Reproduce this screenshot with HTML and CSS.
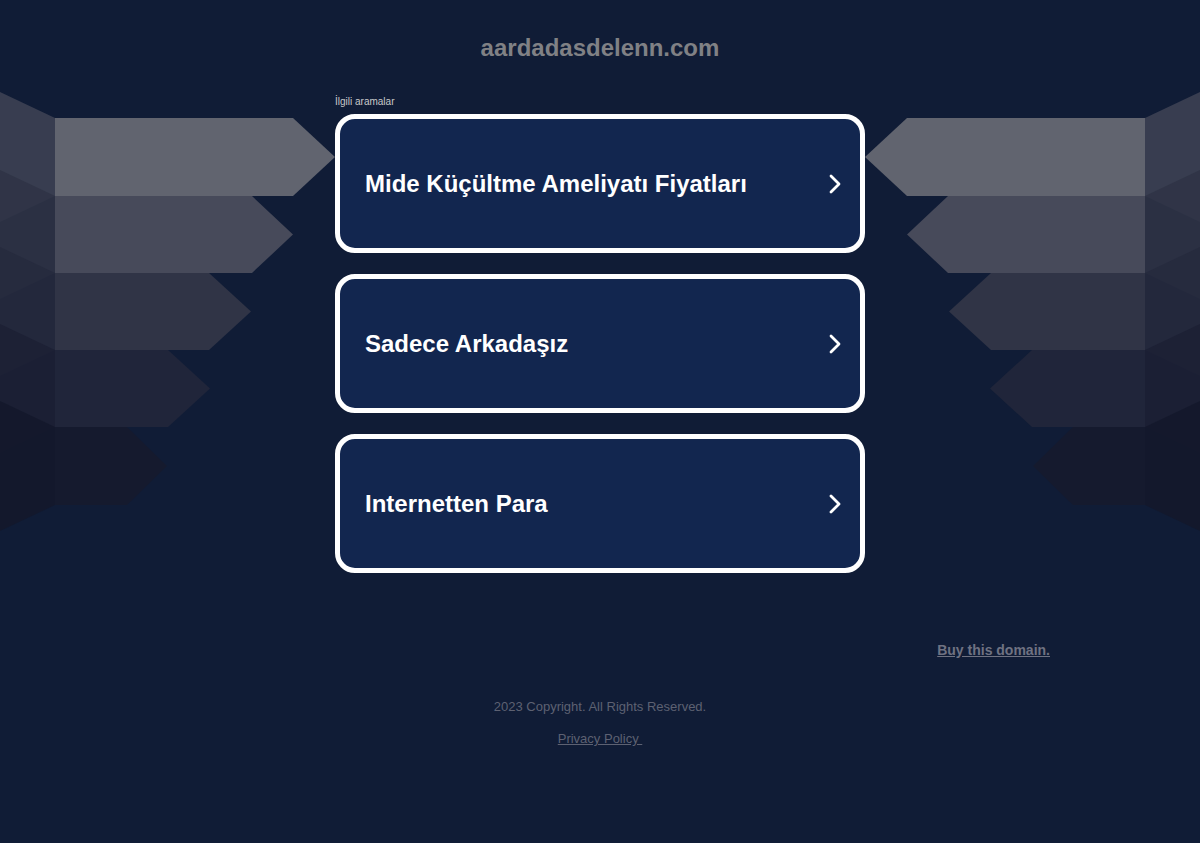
FILE: index.html
```html
<!DOCTYPE html>
<html lang="tr">
<head>
<meta charset="utf-8">
<title>aardadasdelenn.com</title>
<link rel="stylesheet" href="styles.css">
</head>
<body>
<header class="site-title">aardadasdelenn.com</header>
<main class="stage">
  <svg class="art art-left" width="335" height="450" viewBox="0 0 335 450" aria-hidden="true">
    <g class="sides">
      <polygon class="s1" points="55,28 0,2 0,132 55,106"/>
      <polygon class="s2" points="55,106 0,80 0,209 55,183"/>
      <polygon class="s3" points="55,183 0,157 0,286 55,260"/>
      <polygon class="s4" points="55,260 0,234 0,363 55,337"/>
      <polygon class="s5" points="55,337 0,311 0,441 55,415"/>
    </g>
    <polygon class="b1" points="55,28 293,28 335,67 293,106 55,106"/>
    <polygon class="b2" points="55,106 252,106 293,144.5 252,183 55,183"/>
    <polygon class="b3" points="55,183 209,183 251,221.5 209,260 55,260"/>
    <polygon class="b4" points="55,260 168,260 210,298.5 168,337 55,337"/>
    <polygon class="b5" points="55,337 127,337 167,376 127,415 55,415"/>
  </svg>
  <section class="results">
    <p class="label">İlgili aramalar</p>
    <a class="card" href="#">
      <span class="card-text">Mide Küçültme Ameliyatı Fiyatları</span>
      <svg class="chev" width="12" height="20" viewBox="0 0 12 20"><path d="M2 2 L10 10 L2 18"/></svg>
    </a>
    <a class="card" href="#">
      <span class="card-text">Sadece Arkadaşız</span>
      <svg class="chev" width="12" height="20" viewBox="0 0 12 20"><path d="M2 2 L10 10 L2 18"/></svg>
    </a>
    <a class="card" href="#">
      <span class="card-text">Internetten Para</span>
      <svg class="chev" width="12" height="20" viewBox="0 0 12 20"><path d="M2 2 L10 10 L2 18"/></svg>
    </a>
  </section>
  <svg class="art art-right" width="335" height="450" viewBox="0 0 335 450" aria-hidden="true">
    <g class="sides">
      <polygon class="s1" points="55,28 0,2 0,132 55,106"/>
      <polygon class="s2" points="55,106 0,80 0,209 55,183"/>
      <polygon class="s3" points="55,183 0,157 0,286 55,260"/>
      <polygon class="s4" points="55,260 0,234 0,363 55,337"/>
      <polygon class="s5" points="55,337 0,311 0,441 55,415"/>
    </g>
    <polygon class="b1" points="55,28 293,28 335,67 293,106 55,106"/>
    <polygon class="b2" points="55,106 252,106 293,144.5 252,183 55,183"/>
    <polygon class="b3" points="55,183 209,183 251,221.5 209,260 55,260"/>
    <polygon class="b4" points="55,260 168,260 210,298.5 168,337 55,337"/>
    <polygon class="b5" points="55,337 127,337 167,376 127,415 55,415"/>
  </svg>
</main>
<div class="buy"><a href="#">Buy this domain.</a></div>
<footer class="footer">
  <p class="copy">2023 Copyright. All Rights Reserved.</p>
  <p class="privacy"><a href="#">Privacy Policy&nbsp;</a></p>
</footer>
</body>
</html>
```
FILE: styles.css
```css
html, body {
  margin: 0;
  padding: 0;
}
body {
  background: #101c36;
  font-family: "Liberation Sans", Arial, sans-serif;
  width: 1200px;
  height: 843px;
  overflow: hidden;
}
.site-title {
  box-sizing: border-box;
  height: 90px;
  padding-top: 34px;
  font-size: 24px;
  line-height: 28px;
  font-weight: bold;
  color: #808185;
  text-align: center;
}
.stage {
  display: flex;
  align-items: flex-start;
  width: 1200px;
}
.art {
  flex: none;
  display: block;
}
.art-right {
  transform: scaleX(-1);
}
.sides polygon { fill-opacity: 0.88; }
.s1 { fill: #3e4254; }
.s2 { fill: #2f3346; }
.s3 { fill: #262a3d; }
.s4 { fill: #1c2034; }
.s5 { fill: #13182b; }
.b1 { fill: #61646f; }
.b2 { fill: #474a5a; }
.b3 { fill: #303446; }
.b4 { fill: #20253a; }
.b5 { fill: #151a2e; }
.results {
  flex: none;
  width: 530px;
}
.label {
  margin: 0;
  padding-top: 6px;
  margin-bottom: 6px;
  font-size: 10px;
  line-height: 12px;
  color: #c9c9c9;
}
.card {
  box-sizing: border-box;
  display: flex;
  align-items: center;
  justify-content: space-between;
  height: 139px;
  margin-bottom: 21px;
  padding: 0 19px 0 25px;
  border: 5px solid #ffffff;
  border-radius: 20px;
  background: #12264f;
  text-decoration: none;
}
.card:last-child {
  margin-bottom: 0;
}
.card-text {
  font-size: 24px;
  font-weight: bold;
  color: #ffffff;
}
.chev {
  display: block;
  flex: none;
}
.chev path {
  fill: none;
  stroke: #ffffff;
  stroke-width: 2.8;
  stroke-linecap: round;
  stroke-linejoin: round;
}
.buy {
  width: 900px;
  margin: 68px auto 0;
  text-align: right;
  font-size: 14px;
  line-height: 18px;
  font-weight: bold;
}
.buy a {
  color: #6f7282;
}
.footer {
  margin-top: 40px;
  text-align: center;
  font-size: 13px;
  line-height: 16px;
  color: #5d6172;
}
.footer p {
  margin: 0;
}
.privacy {
  margin-top: 16px !important;
}
.privacy a {
  color: #5d6172;
}
```
